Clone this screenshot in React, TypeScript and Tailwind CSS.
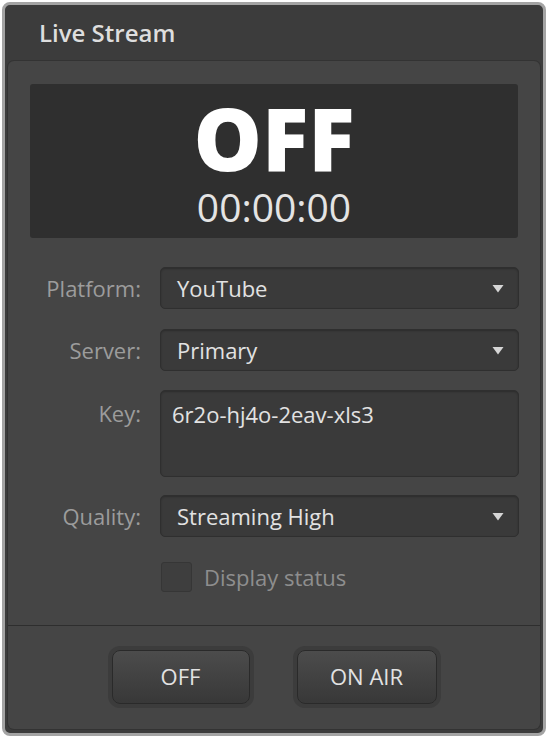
import React from 'react'

const font = { fontFamily: '"Open Sans", "Liberation Sans", sans-serif' }

function Arrow() {
  return (
    <svg width="12" height="9" viewBox="0 0 12 9" className="shrink-0">
      <path d="M0.5 1 L11.5 1 L6 8.5 Z" fill="#d6d6d6" />
    </svg>
  )
}

function Select({ value }: { value: string }) {
  return (
    <div className="flex h-[42px] items-center justify-between rounded-[5px] border border-[#2f2f2f] bg-[#3a3a3a] pl-[16px] pr-[14px] shadow-[inset_0_1px_2px_rgba(0,0,0,0.25)]">
      <span className="text-[22px] leading-none text-[#e2e2e2]">{value}</span>
      <Arrow />
    </div>
  )
}

function Label({ children, top }: { children: React.ReactNode; top?: boolean }) {
  return (
    <div
      className={
        top
          ? 'pt-[9px] text-right text-[22px] leading-[28px] text-[#9c9c9c]'
          : 'flex h-[42px] items-center justify-end text-[22px] leading-none text-[#9c9c9c]'
      }
    >
      {children}
    </div>
  )
}

function Btn({ children, w }: { children: React.ReactNode; w: string }) {
  return (
    <button
      className={
        'flex h-[54px] items-center justify-center rounded-[8px] border border-[#2a2a2a] bg-gradient-to-b from-[#4c4c4c] to-[#383838] text-[22px] text-[#e2e2e2] shadow-[0_0_0_4px_#3c3c3c] ' +
        w
      }
    >
      {children}
    </button>
  )
}

export default function App() {
  return (
    <div className="h-[738px] w-[548px] bg-white p-[2px]" style={font}>
      <div className="flex h-full flex-col rounded-[8px] border-[3px] border-[#a4a4a4] bg-[#3c3c3c] px-[3px] pb-[4px]">
        <div className="flex h-[56px] shrink-0 items-center pl-[31px] text-[24px] font-semibold text-[#dedede]">
          Live Stream
        </div>
        <div className="flex flex-1 flex-col rounded-[6px] bg-[#454545] shadow-[0_0_0_1px_#333]">
          <div className="px-[22px] pt-[23px]">
            <div className="flex h-[154px] flex-col items-center rounded-[3px] bg-[#2f2f2f] pt-[14px]">
              <div className="text-[86px] font-extrabold leading-[80px] text-white">OFF</div>
              <div className="mt-[9px] text-[39px] leading-[40px] text-[#e4e4e4]">00:00:00</div>
            </div>
          </div>

          <div className="mt-[29px] grid grid-cols-[111px_1fr] gap-x-[19px] pl-[22px] pr-[21px]">
            <Label>Platform:</Label>
            <Select value="YouTube" />

            <div className="col-span-2 h-[20px]" />
            <Label>Server:</Label>
            <Select value="Primary" />

            <div className="col-span-2 h-[19px]" />
            <Label top>Key:</Label>
            <div className="h-[87px] rounded-[5px] border border-[#2f2f2f] bg-[#3a3a3a] pl-[11px] pt-[9px] text-[22px] leading-[28px] text-[#e2e2e2] shadow-[inset_0_1px_2px_rgba(0,0,0,0.25)]">
              6r2o-hj4o-2eav-xls3
            </div>

            <div className="col-span-2 h-[18px]" />
            <Label>Quality:</Label>
            <Select value="Streaming High" />

            <div className="col-span-2 h-[25px]" />
            <div />
            <div className="flex items-center gap-[12px] pl-[1px]">
              <div className="h-[30px] w-[31px] rounded-[3px] border border-[#363636] bg-[#3e3e3e]" />
              <span className="text-[22px] leading-none text-[#8e8e8e]">Display status</span>
            </div>
          </div>

          <div className="mt-[33px] h-px bg-[#2e2e2e]" />
          <div className="flex flex-1 items-center justify-center gap-[47px] pb-[2px]">
            <Btn w="w-[138px]">OFF</Btn>
            <Btn w="w-[140px]">ON AIR</Btn>
          </div>
        </div>
      </div>
    </div>
  )
}
